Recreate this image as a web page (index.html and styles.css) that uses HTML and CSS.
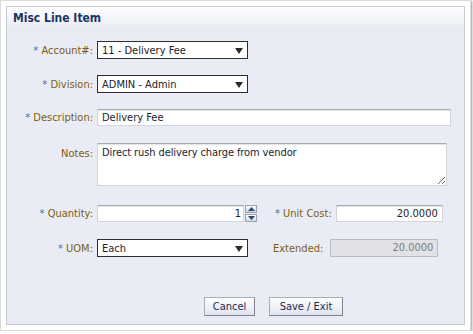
FILE: index.html
```html
<!DOCTYPE html>
<html>
<head>
<meta charset="utf-8">
<link rel="stylesheet" href="styles.css">
</head>
<body>
<div class="frame">
  <div class="panel">
    <div class="header">Misc Line Item</div>
    <div class="form">
      <div class="row">
        <label class="lbl"><span class="req">*</span> Account#:</label>
        <div class="select"><span>11 - Delivery Fee</span><svg class="arrow" width="8" height="6" viewBox="0 0 8 6"><path d="M0 0H8L4 6Z" fill="#2b2b2b"/></svg></div>
      </div>
      <div class="row">
        <label class="lbl"><span class="req">*</span> Division:</label>
        <div class="select"><span>ADMIN - Admin</span><svg class="arrow" width="8" height="6" viewBox="0 0 8 6"><path d="M0 0H8L4 6Z" fill="#2b2b2b"/></svg></div>
      </div>
      <div class="row">
        <label class="lbl"><span class="req">*</span> Description:</label>
        <div class="input desc">Delivery Fee</div>
      </div>
      <div class="row top gap17">
        <label class="lbl notes-lbl">Notes:</label>
        <textarea class="notes">Direct rush delivery charge from vendor</textarea>
      </div>
      <div class="row gap19">
        <label class="lbl"><span class="req">*</span> Quantity:</label>
        <div class="input qty">1</div>
        <div class="spin">
          <div class="spin-btn"><svg width="7" height="4" viewBox="0 0 7 4"><path d="M0 4L3.5 0L7 4Z" fill="#2d4a6e"/></svg></div>
          <div class="spin-btn"><svg width="7" height="4" viewBox="0 0 7 4"><path d="M0 0H7L3.5 4Z" fill="#2d4a6e"/></svg></div>
        </div>
        <label class="lbl2 unit-lbl"><span class="req">*</span> Unit Cost:</label>
        <div class="input num unit">20.0000</div>
      </div>
      <div class="row gap17">
        <label class="lbl"><span class="req">*</span> UOM:</label>
        <div class="select"><span>Each</span><svg class="arrow" width="8" height="6" viewBox="0 0 8 6"><path d="M0 0H8L4 6Z" fill="#2b2b2b"/></svg></div>
        <label class="lbl2 ext-lbl">Extended:</label>
        <div class="input num disabled ext">20.0000</div>
      </div>
      <div class="buttons">
        <button class="btn cancel">Cancel</button>
        <button class="btn save">Save / Exit</button>
      </div>
    </div>
  </div>
</div>
</body>
</html>
```

FILE: styles.css
```css
html, body {
  margin: 0;
  padding: 0;
  background: #ffffff;
}

body {
  font-family: "DejaVu Sans Condensed", "Liberation Sans", Arial, sans-serif;
  font-size: 11px;
}

.frame {
  box-sizing: border-box;
  width: 471px;
  height: 331px;
  border: 1px solid #dadada;
  box-shadow: 1px 1px 2px #9a9a9a;
  padding: 5px;
  background: #fff;
}

.panel {
  box-sizing: border-box;
  height: 100%;
  border: 1px solid #c6c9d2;
  background: #e9ecf5;
}

.header {
  height: 21px;
  padding-left: 6px;
  line-height: 22px;
  font-size: 12px;
  font-weight: bold;
  color: #1b3566;
  background: linear-gradient(#ffffff, #e9ecf5);
}

.form {
  padding-top: 13px;
  display: flex;
  flex-direction: column;
}

.row {
  display: flex;
  align-items: center;
  margin-bottom: 16px;
}

.row.top {
  align-items: flex-start;
}

.gap17 { margin-top: 1px; }
.gap19 { margin-top: 3px; }

.lbl {
  width: 86px;
  margin-right: 4px;
  text-align: right;
  color: #7c5d10;
  white-space: nowrap;
}

.lbl2 {
  color: #7c5d10;
  white-space: nowrap;
}

.req {
  color: #4f6d9b;
}

.notes-lbl {
  padding-top: 4px;
}

.select {
  box-sizing: border-box;
  width: 151px;
  height: 18px;
  border: 1px solid #2e2e2e;
  background: #fff;
  color: #1d1d2b;
  display: flex;
  align-items: center;
  justify-content: space-between;
  padding: 0 4px 0 4px;
}

.arrow {
  margin-top: 1px;
}

.input {
  box-sizing: border-box;
  height: 17px;
  border: 1px solid #d3d5dc;
  border-top-color: #a9a9a9;
  background: #fff;
  color: #1d1d2b;
  padding: 0 4px;
  line-height: 15px;
  box-shadow: inset 0 1px 1px #e4e4e4;
}

.desc {
  width: 354px;
}

.notes {
  box-sizing: border-box;
  width: 350px;
  height: 43px;
  margin: 0;
  border: 1px solid #d3d5dc;
  border-top-color: #a9a9a9;
  background: #fff;
  color: #1d1d2b;
  font-family: inherit;
  font-size: 11px;
  letter-spacing: -0.1px;
  padding: 2px 4px;
  resize: both;
  box-shadow: inset 0 1px 1px #e4e4e4;
}

.qty {
  width: 147px;
  text-align: right;
  padding-right: 2px;
}

.spin {
  width: 12px;
  height: 17px;
  margin-left: 1px;
  display: flex;
  flex-direction: column;
  gap: 1px;
}

.spin-btn {
  box-sizing: border-box;
  flex: 1;
  border: 1px solid #9aa3b2;
  background: linear-gradient(#ffffff, #cfd6e3);
  display: flex;
  align-items: center;
  justify-content: center;
}

.unit-lbl {
  margin-left: 18px;
  margin-right: 4px;
}

.num {
  text-align: right;
}

.unit {
  width: 107px;
  height: 17px;
}

.ext-lbl {
  margin-left: 25px;
  margin-right: 7px;
}

.disabled {
  background: #e1e2e6;
  border: 1px solid #b9bbc1;
  color: #7b7b7b;
  box-shadow: none;
}

.ext {
  width: 108px;
  height: 18px;
  line-height: 16px;
}

.buttons {
  display: flex;
  gap: 14px;
  margin-top: 24px;
  padding-left: 197px;
}

.btn {
  box-sizing: border-box;
  height: 19px;
  padding: 0;
  border: 1px solid #a9adb5;
  border-right-color: #7d828c;
  border-bottom-color: #7d828c;
  background: linear-gradient(#ffffff, #dfe4ee);
  color: #1a2d55;
  font-family: inherit;
  font-size: 11px;
}

.cancel { width: 51px; }
.save { width: 74px; }
```
